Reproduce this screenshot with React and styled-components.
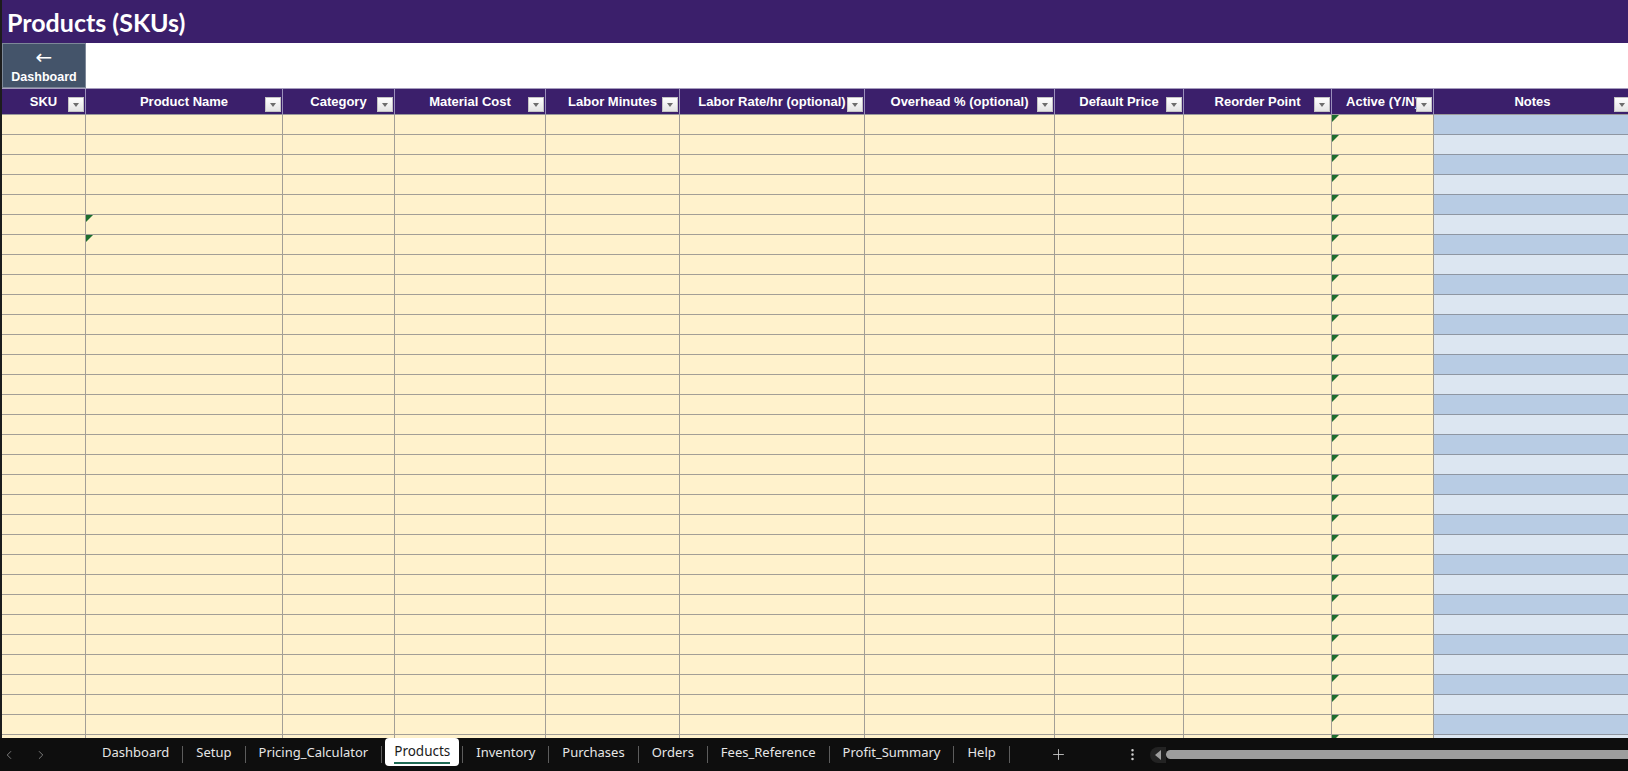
import React from 'react';
import styled, { createGlobalStyle } from 'styled-components';
import { ChevronLeft, ChevronRight, Plus, EllipsisVertical } from 'lucide-react';

const GlobalStyle = createGlobalStyle`
    html, body {
        margin: 0;
        padding: 0;
        background: #ffffff;
        overflow: hidden;
    }
    * {
        box-sizing: border-box;
    }
`;

const Page = styled.div`
    width: 1628px;
    height: 771px;
    display: flex;
    flex-direction: column;
    overflow: hidden;
    font-family: "Liberation Sans", Arial, sans-serif;
`;

const Sheet = styled.div`
    flex: 1;
    display: flex;
    flex-direction: column;
    overflow: hidden;
    border-left: 2px solid #1c1c1c;
`;

const TitleBar = styled.div`
    height: 43px;
    flex-shrink: 0;
    display: flex;
    align-items: center;
    padding-left: 5px;
    background-color: #3b1f6b;
    color: #ffffff;
    font-family: Lato, "Liberation Sans", sans-serif;
    font-weight: 700;
    font-size: 25px;
`;

const ButtonRow = styled.div`
    height: 46px;
    flex-shrink: 0;
    display: flex;
    background-color: #ffffff;
    border-bottom: 1px solid #a59cbd;
`;

const BackButton = styled.div`
    width: 84px;
    display: flex;
    flex-direction: column;
    align-items: center;
    justify-content: center;
    gap: 8px;
    padding-top: 4px;
    background-color: #44546a;
    color: #ffffff;
    border: 1px solid #7d8898;
    font-weight: 700;
    font-size: 12.5px;

    .arrow {
        font-family: "DejaVu Sans", sans-serif;
        font-size: 20px;
        line-height: 10px;
        font-weight: 400;
    }
`;

const Row = styled.div`
    display: flex;
    flex-shrink: 0;
    height: ${props => props.$height}px;
`;

const HeaderCell = styled.div`
    position: relative;
    width: ${props => props.$width}px;
    flex-shrink: 0;
    display: flex;
    align-items: center;
    justify-content: center;
    background-color: #3b1f6b;
    color: #ffffff;
    font-weight: 700;
    font-size: 13px;
    white-space: nowrap;
    overflow: hidden;
    border-right: 1px solid #9a8fbb;
    border-bottom: 1px solid #9a9a9a;
`;

const FilterButton = styled.div`
    position: absolute;
    right: 1px;
    bottom: 2px;
    width: 16px;
    height: 15px;
    background: linear-gradient(#ffffff, #e4e4e4);
    border: 1px solid #c4c4c4;
    display: flex;
    align-items: center;
    justify-content: center;

    &::after {
        content: '';
        border-left: 3.5px solid transparent;
        border-right: 3.5px solid transparent;
        border-top: 4px solid #6d6d6d;
        margin-top: 1px;
    }
`;

const Cell = styled.div`
    position: relative;
    width: ${props => props.$width}px;
    flex-shrink: 0;
    background-color: ${props => props.$bg};
    border-right: 1px solid ${props => props.$line};
    border-bottom: 1px solid ${props => props.$line};

    ${props => props.$flag && `
        &::before {
            content: '';
            position: absolute;
            top: 0;
            left: 0;
            border-top: 7px solid #1e6e2e;
            border-right: 7px solid transparent;
        }
    `}
`;

const TabBar = styled.div`
    height: 33px;
    flex-shrink: 0;
    display: flex;
    align-items: center;
    background-color: #0e0e0e;
    color: #e6e6e6;
    font-family: "Noto Sans", "Open Sans", sans-serif;
    font-size: 13px;
`;

const NavArrows = styled.div`
    width: 89px;
    display: flex;
    align-items: center;
    gap: 18px;
    padding-left: 2px;
    color: #8a8a8a;
`;

const Tab = styled.div`
    height: 28px;
    align-self: flex-start;
    display: flex;
    flex-direction: column;
    align-items: center;
    justify-content: center;
    padding: ${props => props.$active ? '0 9px' : '0 13px'};
    margin: ${props => props.$active ? '0 3px' : '0'};
    background-color: ${props => props.$active ? '#ffffff' : 'transparent'};
    color: ${props => props.$active ? '#1a1a1a' : '#e6e6e6'};
    font-size: ${props => props.$active ? '13.5px' : '13px'};
    border-radius: ${props => props.$active ? '4px' : '0'};
    white-space: nowrap;

    span {
        padding-top: ${props => props.$active ? '0' : '4px'};
        border-bottom: 2px solid ${props => props.$active ? '#1f6b55' : 'transparent'};
        padding-bottom: 2px;
        margin-top: ${props => props.$active ? '2px' : '0'};
    }
`;

const TabDivider = styled.div`
    width: 1px;
    height: 17px;
    background-color: #5c5c5c;
`;

const IconButton = styled.div`
    display: flex;
    align-items: center;
    color: ${props => props.$color || '#d0d0d0'};
    margin-left: ${props => props.$ml}px;
`;

const ScrollTrack = styled.div`
    flex: 1;
    display: flex;
    align-items: center;
    margin-left: 10px;
    height: 20px;

    .left {
        display: flex;
        align-items: center;
        justify-content: center;
        width: 16px;
        height: 16px;
        border-radius: 8px 0 0 8px;
        background-color: #232323;
        margin-right: 0;

        &::before {
            content: '';
            border-top: 5px solid transparent;
            border-bottom: 5px solid transparent;
            border-right: 6px solid #9d9d9d;
        }
    }
`;

const ScrollThumb = styled.div`
    flex: 1;
    height: 9px;
    background-color: #9d9d9d;
    border-radius: 5px 0 0 5px;
`;

const columns = [
    { label: 'SKU', width: 84 },
    { label: 'Product Name', width: 197 },
    { label: 'Category', width: 112 },
    { label: 'Material Cost', width: 151 },
    { label: 'Labor Minutes', width: 134 },
    { label: 'Labor Rate/hr (optional)', width: 185 },
    { label: 'Overhead % (optional)', width: 190 },
    { label: 'Default Price', width: 129 },
    { label: 'Reorder Point', width: 148 },
    { label: 'Active (Y/N)', width: 102 },
    { label: 'Notes', width: 198 },
];

const tabs = [
    'Dashboard',
    'Setup',
    'Pricing_Calculator',
    'Products',
    'Inventory',
    'Purchases',
    'Orders',
    'Fees_Reference',
    'Profit_Summary',
    'Help',
];

const ROWS = 32;

const cellStyle = (col, row) => {
    if (col === 10) {
        return { bg: row % 2 === 0 ? '#b8cce4' : '#dce6f1', line: '#8e96a2' };
    }
    return { bg: '#fff2cc', line: '#a39f96' };
};

const hasFlag = (col, row) => col === 9 || (col === 1 && (row === 5 || row === 6));

const App = () => {
    return (
        <Page>
            <GlobalStyle />
            <Sheet>
                <TitleBar>Products (SKUs)</TitleBar>
                <ButtonRow>
                    <BackButton>
                        <span className="arrow">←</span>
                        <span>Dashboard</span>
                    </BackButton>
                </ButtonRow>
                <Row $height={26}>
                    {columns.map(c => (
                        <HeaderCell key={c.label} $width={c.width}>
                            {c.label}
                            <FilterButton />
                        </HeaderCell>
                    ))}
                </Row>
                {Array.from({ length: ROWS }).map((_, r) => (
                    <Row key={r} $height={20}>
                        {columns.map((c, i) => {
                            const s = cellStyle(i, r);
                            return (
                                <Cell
                                    key={c.label}
                                    $width={c.width}
                                    $bg={s.bg}
                                    $line={s.line}
                                    $flag={hasFlag(i, r)}
                                />
                            );
                        })}
                    </Row>
                ))}
            </Sheet>
            <TabBar>
                <NavArrows>
                    <ChevronLeft size={14} strokeWidth={1.5} />
                    <ChevronRight size={14} strokeWidth={1.5} />
                </NavArrows>
                {tabs.map(t => (
                    <React.Fragment key={t}>
                        <Tab $active={t === 'Products'}>
                            <span>{t}</span>
                        </Tab>
                        <TabDivider />
                    </React.Fragment>
                ))}
                <IconButton $ml={40}>
                    <Plus size={17} strokeWidth={1.2} />
                </IconButton>
                <IconButton $ml={58}>
                    <EllipsisVertical size={15} strokeWidth={2} />
                </IconButton>
                <ScrollTrack>
                    <div className="left" />
                    <ScrollThumb />
                </ScrollTrack>
            </TabBar>
        </Page>
    );
};

export default App;
